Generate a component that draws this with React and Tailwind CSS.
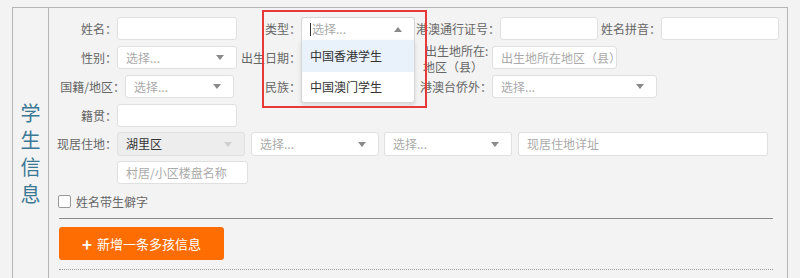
import React from "react";

const font = { fontFamily: '"Noto Sans CJK SC", "Noto Sans", sans-serif' };

function Caret({ up = false, light = false }) {
  return (
    <svg width="8" height="5" viewBox="0 0 8 5" className="shrink-0">
      {up ? (
        <path d="M0 5 L4 0 L8 5 Z" fill={light ? "#cfcfcf" : "#8a8a8a"} />
      ) : (
        <path d="M0 0 L8 0 L4 5 Z" fill={light ? "#cfcfcf" : "#8a8a8a"} />
      )}
    </svg>
  );
}

function Label({ w, children, className = "" }) {
  return (
    <div
      className={`shrink-0 h-full flex items-center justify-end text-[12px] text-[#666] whitespace-nowrap ${className}`}
      style={{ width: w }}
    >
      {children}
    </div>
  );
}

function Input({ w, placeholder, className = "" }) {
  return (
    <div
      className={`shrink-0 h-full bg-white border border-[#e0e0e0] rounded-[3px] flex items-center pl-[8px] text-[12px] text-[#aaa] ${className}`}
      style={{ width: w }}
    >
      {placeholder}
    </div>
  );
}

function Select({ w, placeholder = "选择...", value, disabled = false, className = "" }) {
  return (
    <div
      className={`shrink-0 h-full border border-[#e0e0e0] rounded-[3px] flex items-center justify-between pl-[8px] pr-[12px] text-[12px] ${
        disabled ? "bg-[#ededed] text-[#333]" : "bg-white text-[#aaa]"
      } ${className}`}
      style={{ width: w }}
    >
      <span>{value || placeholder}</span>
      <Caret light={disabled} />
    </div>
  );
}

export default function App() {
  return (
    <div className="relative w-[800px] h-[278px] overflow-hidden bg-[#f3f3f3]" style={font}>
      <div className="pt-[7px] pl-[12px] pr-[12px]">
        <div className="flex border-t border-l border-r border-[#b5b5b5] h-[300px]">
          {/* title column */}
          <div className="w-[36px] shrink-0 border-r border-[#b5b5b5] flex flex-col items-center pt-[91px] text-[20px] leading-[27px] text-[#3b7893]">
            <span>学</span>
            <span>生</span>
            <span>信</span>
            <span>息</span>
          </div>

          {/* content */}
          <div className="flex-1 pt-[9px] flex flex-col">
            {/* row 1 */}
            <div className="flex h-[23px]">
              <Label w={68}>姓名：</Label>
              <Input w={120} />
              <Label w={64}>类型：</Label>
              <div className="relative shrink-0 w-[114px] h-full z-10">
                <div className="h-full bg-white border border-[#d6d6d6] border-b-0 rounded-t-[3px] flex items-center justify-between pl-[8px] pr-[12px] text-[12px] text-[#aaa]">
                  <span className="flex items-center">
                    <span className="inline-block w-px h-[13px] bg-[#333] mr-px" />
                    选择...
                  </span>
                  <Caret up />
                </div>
                <div className="absolute left-0 top-full w-full bg-white border border-[#d6d6d6] border-t-0 rounded-b-[3px] shadow-[0_2px_4px_rgba(0,0,0,0.12)] text-[12px] text-[#333]">
                  <div className="h-[32px] flex items-center pl-[8px] bg-[#e9f1fb]">中国香港学生</div>
                  <div className="h-[30px] flex items-center pl-[8px]">中国澳门学生</div>
                </div>
              </div>
              <Label w={85}>港澳通行证号：</Label>
              <Input w={98} />
              <Label w={63}>姓名拼音：</Label>
              <Input w={118} />
            </div>

            {/* row 2 */}
            <div className="flex h-[23px] mt-[6px]">
              <Label w={68}>性别：</Label>
              <Select w={120} />
              <Label w={64}>出生日期：</Label>
              <Input w={114} />
              <div className="shrink-0 w-[77px] h-full pl-[8px] pt-[2px] flex flex-col justify-center text-[12px] leading-[16px] text-[#666] whitespace-nowrap">
                <span className="pl-[2px]">出生地所在:</span>
                <span>地区（县）</span>
              </div>
              <Input w={125} placeholder="出生地所在地区（县）" />
            </div>

            {/* row 3 */}
            <div className="flex h-[23px] mt-[6px]">
              <Label w={76}>国籍/地区：</Label>
              <Select w={109} />
              <Label w={67}>民族：</Label>
              <Select w={114} placeholder=" " />
              <Label w={77}>港澳台侨外：</Label>
              <Select w={165} />
            </div>

            {/* row 4 */}
            <div className="flex h-[23px] mt-[6px]">
              <Label w={68}>籍贯：</Label>
              <Input w={120} />
            </div>

            {/* row 5 */}
            <div className="flex h-[24px] mt-[5px]">
              <Label w={68}>现居住地：</Label>
              <Select w={128} value="湖里区" disabled />
              <Select w={128} className="ml-[6px]" />
              <Select w={128} className="ml-[5px]" />
              <Input w={250} placeholder="现居住地详址" className="ml-[6px]" />
            </div>

            {/* row 6 */}
            <div className="flex h-[23px] mt-[5px]">
              <div className="w-[68px] shrink-0" />
              <Input w={131} placeholder="村居/小区楼盘名称" />
            </div>

            {/* checkbox */}
            <div className="flex items-center h-[13px] mt-[11px] ml-[9px]">
              <div className="w-[13px] h-[13px] bg-white border border-[#999] rounded-[2px]" />
              <span className="ml-[5px] text-[12px] text-[#666]">姓名带生僻字</span>
            </div>

            {/* solid line */}
            <div className="mt-[10px] ml-[10px] mr-[14px] border-t border-[#8a8a8a]" />

            {/* button */}
            <div className="mt-[8px] ml-[10px] w-[165px] h-[33px] bg-[#fe6d02] rounded-[3px] flex items-center justify-center text-white text-[13px] gap-[5px]">
              <span className="text-[17px] font-bold leading-none">+</span>
              <span>新增一条多孩信息</span>
            </div>

            {/* dotted line */}
            <div className="mt-[9px] ml-[10px] mr-[14px] border-t border-dotted border-[#9a9a9a]" />
          </div>
        </div>
      </div>

      {/* red annotation box */}
      <div className="absolute left-[262px] top-[10px] w-[165px] h-[98px] border-2 border-[#e8393a] z-20 pointer-events-none" />
    </div>
  );
}
